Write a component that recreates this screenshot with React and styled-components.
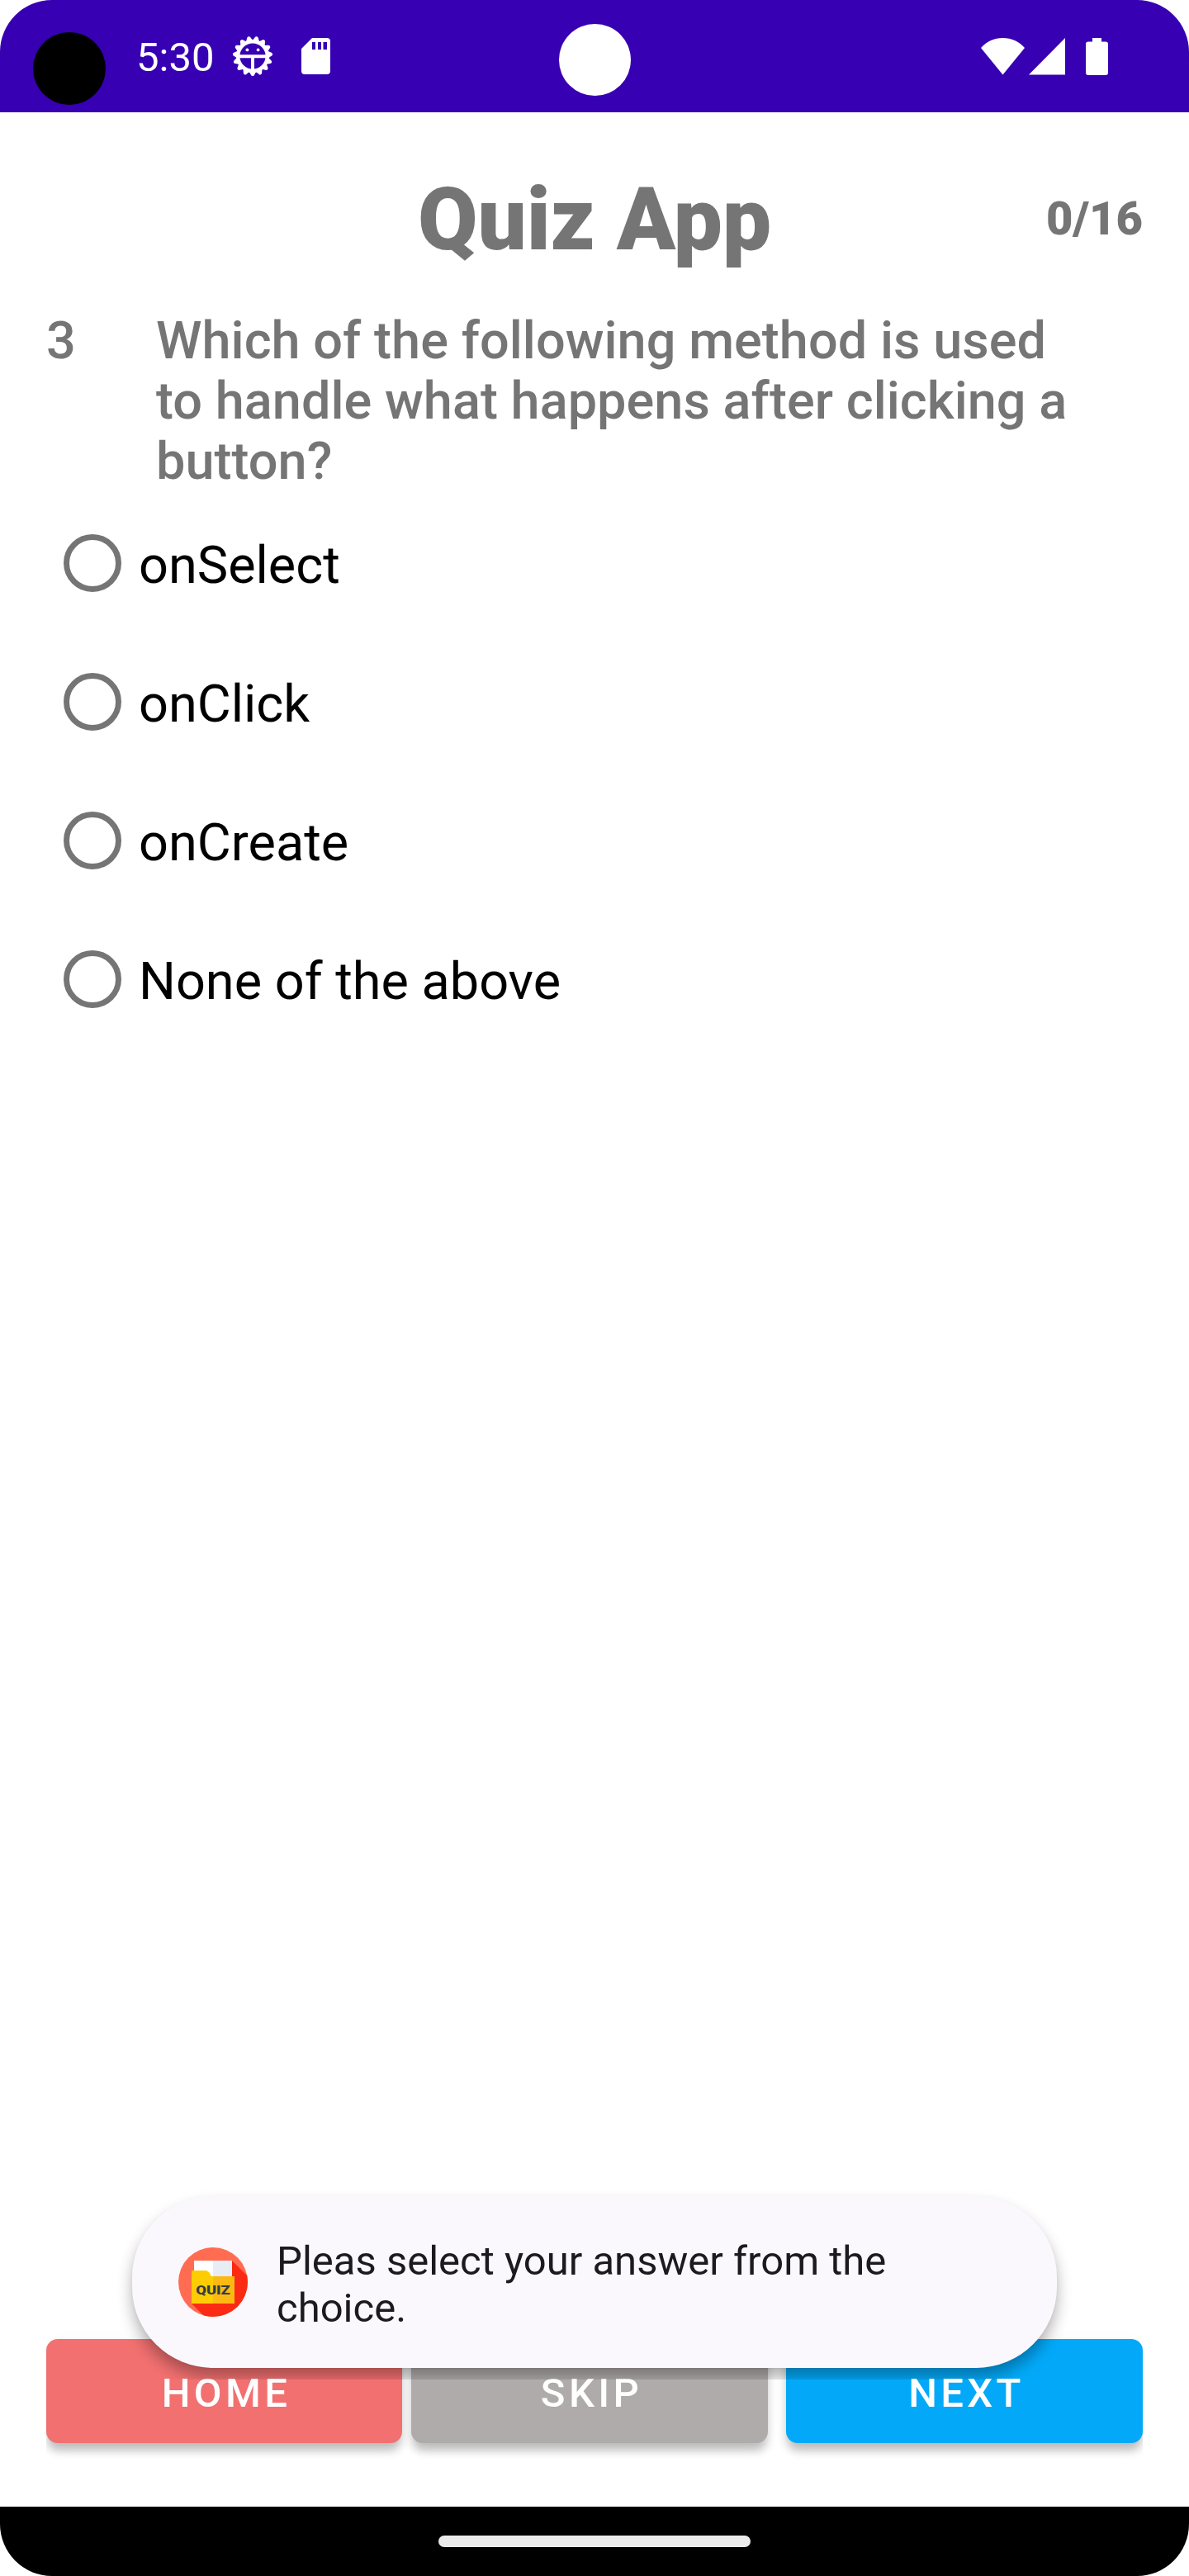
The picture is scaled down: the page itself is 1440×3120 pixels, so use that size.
import React from "react";
import styled, { createGlobalStyle } from "styled-components";

const Global = createGlobalStyle`
  body { margin: 0; background: #fff; font-family: Roboto, sans-serif; }
  * { box-sizing: border-box; }
`;

const Screen = styled.div`
  position: relative;
  width: 1440px;
  height: 3120px;
  display: flex;
  flex-direction: column;
  background: #fff;
  border-radius: 63px;
  overflow: hidden;
`;

const StatusBar = styled.header`
  height: 136px;
  display: flex;
  align-items: center;
  justify-content: space-between;
  padding: 0 98px 0 165px;
  background: #3700b3;
  color: #fff;
`;

const StatusGroup = styled.div`
  display: flex;
  align-items: center;
`;

const Clock = styled.span`
  font-size: 49px;
  line-height: 58px;
  width: 116px;
  padding-top: 4px;
`;

const Cutout = styled.div`
  position: absolute;
  left: ${(p) => p.$x}px;
  top: ${(p) => p.$y}px;
  width: ${(p) => p.$size}px;
  height: ${(p) => p.$size}px;
  border-radius: 50%;
  background: ${(p) => p.$color};
`;

const Glyph = styled.svg`
  display: block;
  flex: none;
  margin-left: ${(p) => p.$gap || 0}px;
`;

const Content = styled.main`
  flex: 1;
  display: flex;
  flex-direction: column;
  padding: 63px 56px 77px;
`;

const Heading = styled.div`
  display: grid;
  grid-template-columns: 1fr auto 1fr;
  align-items: center;
  color: #757575;
`;

const Title = styled.h1`
  grid-column: 2;
  margin: 0;
  font-size: 105px;
  line-height: 136px;
  font-weight: 900;
`;

const Score = styled.span`
  justify-self: end;
  padding-bottom: 4px;
  font-size: 56px;
  line-height: 66px;
  font-weight: 900;
`;

const Question = styled.div`
  display: grid;
  grid-template-columns: 133px 1fr;
  margin-top: 41px;
  color: #757575;
  font-size: 63px;
  line-height: 73px;
  font-weight: 500;
  letter-spacing: 0.04px;
`;

const QuestionText = styled.p`
  margin: 0;
  max-width: 1130px;
`;

const Options = styled.div`
  display: flex;
  flex-direction: column;
  margin-top: 3px;
`;

const Option = styled.label`
  height: 168px;
  display: flex;
  align-items: center;
  gap: 21px;
  padding-left: 21px;
  font-size: 63px;
  line-height: 74px;
  color: #000;
`;

const OptionLabel = styled.span`
  padding-top: 5px;
`;

const Radio = styled.span`
  width: 70px;
  height: 70px;
  border: 7px solid #757575;
  border-radius: 50%;
`;

const Actions = styled.div`
  display: flex;
  margin-top: auto;
  clip-path: inset(-30px 0 -30px 0);
`;

const Action = styled.button`
  width: ${(p) => p.$width || 432}px;
  height: 126px;
  margin: 0 0 0 ${(p) => p.$gap || 0}px;
  padding: 4px 0 0 5px;
  border: 0;
  border-radius: 14px;
  background: ${(p) => p.$color};
  color: #fff;
  font-family: inherit;
  font-size: 49px;
  font-weight: 500;
  letter-spacing: 4.37px;
  box-shadow: 0 11px 12px -2px rgba(0, 0, 0, 0.24), 0 4px 16px rgba(0, 0, 0, 0.06);
`;

const Toast = styled.div`
  position: absolute;
  left: 160px;
  top: 2660px;
  width: 1120px;
  height: 208px;
  display: flex;
  align-items: center;
  padding: 0 56px;
  gap: 35px;
  border-radius: 98px;
  background: #faf8fd;
  color: #1b1b1f;
  font-size: 49px;
  line-height: 57px;
  box-shadow: 0 11px 18px rgba(0, 0, 0, 0.3), 0 1px 3px rgba(0, 0, 0, 0.04);
  clip-path: inset(-30px -40px -14px -40px);
`;

const ToastText = styled.p`
  margin: 0;
  padding-top: 6px;
  max-width: 790px;
`;

const NavBar = styled.footer`
  height: 84px;
  display: flex;
  align-items: center;
  justify-content: center;
  background: #000;
`;

const NavHandle = styled.div`
  width: 378px;
  height: 14px;
  border-radius: 7px;
  background: #ebebeb;
`;

const teeth = Array.from({ length: 15 }, (_, i) => 90 + i * 24);

const DebugIcon = () => (
  <Glyph width="50" height="50" viewBox="-25 -25 50 50">
    {teeth.map((a) => (
      <path key={a} d="M18 -4.6L22.6 -2.2A2.3 2.3 0 0 1 22.6 2.2L18 4.6Z" fill="#fff" transform={`rotate(${a})`} />
    ))}
    <circle r="17.8" fill="none" stroke="#fff" strokeWidth="4.4" />
    <path d="M-16 0.300H16M0 0.300V16" stroke="#fff" strokeWidth="4" fill="none" />
    <circle cx="-6.6" cy="-7.6" r="1.9" fill="#fff" />
    <circle cx="6.6" cy="-7.6" r="1.9" fill="#fff" />
  </Glyph>
);

const SdIcon = () => (
  <Glyph $gap={34} width="35" height="44" viewBox="0 0 35 44">
    <path
      fill="#fff"
      fillRule="evenodd"
      d="M13 0H31a4 4 0 0 1 4 4V40a4 4 0 0 1-4 4H4a4 4 0 0 1-4-4V13ZM13 5v9h4V5ZM20 5v9h4V5ZM26.500 5v9h4.500V5Z"
    />
  </Glyph>
);

const WifiIcon = () => (
  <Glyph width="53" height="45" viewBox="0 0 53 45">
    <path d="M0 12C7 4 16 0 26.500 0S46 4 53 12L26.500 44.500Z" fill="#fff" />
  </Glyph>
);

const SignalIcon = () => (
  <Glyph $gap={5} width="44" height="45" viewBox="0 0 44 45">
    <path d="M44 0V44.500H0Z" fill="#fff" />
  </Glyph>
);

const BatteryIcon = () => (
  <Glyph $gap={25} width="27" height="45" viewBox="0 0 27 45">
    <path d="M8 0H19V4.500H24a3 3 0 0 1 3 3V42a3 3 0 0 1-3 3H3a3 3 0 0 1-3-3V7.500a3 3 0 0 1 3-3H8Z" fill="#fff" />
  </Glyph>
);

const QuizIcon = () => (
  <Glyph width="84" height="84" viewBox="0 0 84 84">
    <defs>
      <clipPath id="disc">
        <circle cx="42" cy="42" r="42" />
      </clipPath>
    </defs>
    <g clipPath="url(#disc)">
      <rect width="84" height="84" fill="#ff6c52" />
      <path d="M65 16L84 35V84H32L16 68Z" fill="#fb2a15" />
    </g>
    <path d="M19 16H42V40H19Z" fill="#fff" />
    <path d="M42 16H65V40H42Z" fill="#e8edf5" />
    <path d="M16 28H34L37 30L40 35H42V68H16Z" fill="#fdcd02" />
    <path d="M42 35H68V68H42Z" fill="#fdb913" />
    <text x="42" y="57" textAnchor="middle" fontFamily="Roboto, sans-serif" fontSize="15" fontWeight="900" fill="#343b47" textLength="41.500" lengthAdjust="spacingAndGlyphs">
      QUIZ
    </text>
  </Glyph>
);

const choices = ["onSelect", "onClick", "onCreate", "None of the above"];

export default function App() {
  return (
    <>
      <Global />
      <Screen>
        <StatusBar>
          <StatusGroup>
            <Clock>5:30</Clock>
            <DebugIcon />
            <SdIcon />
          </StatusGroup>
          <StatusGroup>
            <WifiIcon />
            <SignalIcon />
            <BatteryIcon />
          </StatusGroup>
        </StatusBar>
        <Cutout $x={40} $y={39} $size={88} $color="#000" />
        <Cutout $x={677} $y={29} $size={87} $color="#fff" />
        <Content>
          <Heading>
            <Title>Quiz App</Title>
            <Score>0/16</Score>
          </Heading>
          <Question>
            <span>3</span>
            <QuestionText>
              Which of the following method is used to handle what happens after clicking a button?
            </QuestionText>
          </Question>
          <Options>
            {choices.map((c) => (
              <Option key={c}>
                <Radio />
                <OptionLabel>{c}</OptionLabel>
              </Option>
            ))}
          </Options>
          <Actions>
            <Action $color="#f27070" $width={431}>HOME</Action>
            <Action $color="#afabaa" $gap={11}>SKIP</Action>
            <Action $color="#03a9f8" $gap={22}>NEXT</Action>
          </Actions>
        </Content>
        <Toast>
          <QuizIcon />
          <ToastText>Pleas select your answer from the choice.</ToastText>
        </Toast>
        <NavBar>
          <NavHandle />
        </NavBar>
      </Screen>
    </>
  );
}
